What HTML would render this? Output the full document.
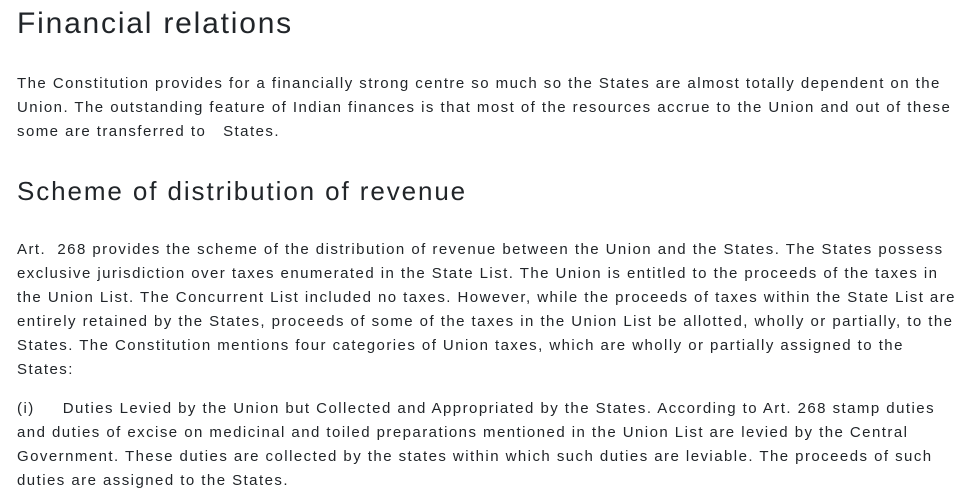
<!DOCTYPE html>
<html><head><meta charset="utf-8"><style>
body{margin:0;background:#fff;color:#212529;font-family:"Liberation Sans",sans-serif;}
h1,h2{margin:0;font-weight:normal;position:absolute;left:17px;white-space:nowrap;}
h1{font-size:30px;top:7px;letter-spacing:1.8px;}
h2{font-size:26px;top:176px;letter-spacing:1.9px;}
p{margin:0;position:absolute;left:17px;font-size:15px;line-height:24px;letter-spacing:1.45px;white-space:nowrap;}
</style></head><body>
<h1>Financial relations</h1>
<p style="top:72px">The Constitution provides for a financially strong centre so much so the States are almost totally dependent on the<br>Union. The outstanding feature of Indian finances is that most of the resources accrue to the Union and out of these<br>some are transferred to &nbsp; States.</p>
<h2>Scheme of distribution of revenue</h2>
<p style="top:238px">Art. &nbsp;268 provides the scheme of the distribution of revenue between the Union and the States. The States possess<br>exclusive jurisdiction over taxes enumerated in the State List. The Union is entitled to the proceeds of the taxes in<br>the Union List. The Concurrent List included no taxes. However, while the proceeds of taxes within the State List are<br>entirely retained by the States, proceeds of some of the taxes in the Union List be allotted, wholly or partially, to the<br>States. The Constitution mentions four categories of Union taxes, which are wholly or partially assigned to the<br>States:</p>
<p style="top:397px">(i) &nbsp; &nbsp; Duties Levied by the Union but Collected and Appropriated by the States. According to Art. 268 stamp duties<br>and duties of excise on medicinal and toiled preparations mentioned in the Union List are levied by the Central<br>Government. These duties are collected by the states within which such duties are leviable. The proceeds of such<br>duties are assigned to the States.</p>
</body></html>
